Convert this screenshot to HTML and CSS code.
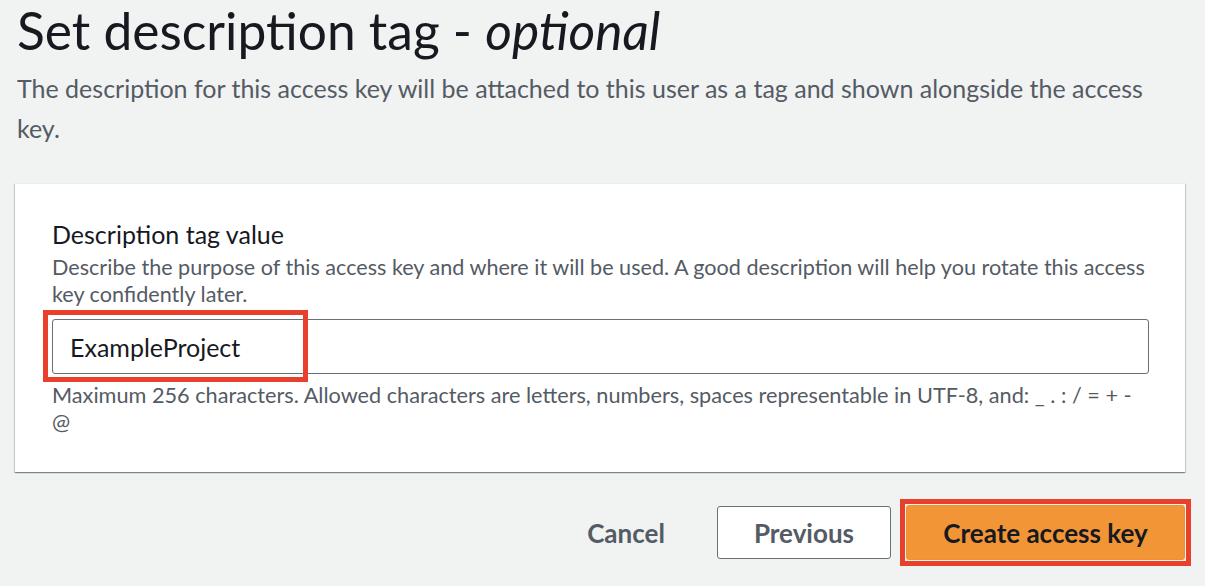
FILE: index.html
```html
<!DOCTYPE html>
<html lang="en">
<head>
<meta charset="utf-8">
<title>Set description tag</title>
<link rel="stylesheet" href="styles.css">
</head>
<body>
<main class="page">
  <h1 class="title">Set description tag - <em>optional</em></h1>
  <p class="intro">The description for this access key will be attached to this user as a tag and shown alongside the access key.</p>

  <section class="card">
    <label class="field-label" for="desc">Description tag value</label>
    <p class="field-desc">Describe the purpose of this access key and where it will be used. A good description will help you rotate this access key confidently later.</p>
    <div class="input-wrap">
      <input id="desc" class="text-input" type="text" value="ExampleProject">
      <span class="annot annot-input"></span>
    </div>
    <p class="field-constraint">Maximum 256 characters. Allowed characters are letters, numbers, spaces representable in UTF-8, and: _ . : / = + - @</p>
  </section>

  <div class="actions">
    <button class="btn btn-link" type="button">Cancel</button>
    <button class="btn btn-normal" type="button">Previous</button>
    <span class="annot-frame">
      <button class="btn btn-primary" type="button">Create access key</button>
    </span>
  </div>
</main>
</body>
</html>
```

FILE: styles.css
```css
* { box-sizing: border-box; }

html, body {
  margin: 0;
  padding: 0;
  background: #f1f2f2;
}

body {
  font-family: Lato, "Open Sans", "Noto Sans", sans-serif;
  color: #16191f;
}

.page {
  padding: 2px 20px 0 15px;
}

.title {
  margin: 0;
  padding-left: 2px;
  font-size: 51.5px;
  line-height: 56px;
  font-weight: 400;
  color: #16191f;
}

.title em {
  font-style: italic;
}

.intro {
  margin: 10px 0 0 0;
  padding-left: 2px;
  font-size: 25px;
  line-height: 40px;
  color: #545b64;
}

.card {
  margin-top: 35px;
  background: #ffffff;
  border-top: 1px solid #eaeded;
  box-shadow: 0 1px 1px 0 rgba(0, 28, 36, 0.3), 1px 1px 1px 0 rgba(0, 28, 36, 0.15), -1px 1px 1px 0 rgba(0, 28, 36, 0.15);
  padding: 35px 36px 36px 37px;
}

.field-label {
  display: block;
  font-size: 25px;
  line-height: 30px;
  color: #16191f;
}

.field-desc {
  margin: 5px 0 0 0;
  font-size: 21.6px;
  line-height: 27px;
  color: #545b64;
}

.input-wrap {
  position: relative;
  margin-top: 11px;
}

.text-input {
  display: block;
  width: 100%;
  height: 55px;
  border: 1px solid #687078;
  border-radius: 3px;
  padding: 0 17px;
  font-family: inherit;
  font-size: 25px;
  color: #16191f;
  background: #fff;
  outline: none;
}

.annot {
  position: absolute;
  border: 5px solid #e8402a;
  pointer-events: none;
}

.annot-input {
  left: -9px;
  top: -9px;
  width: 265px;
  height: 72px;
}

.field-constraint {
  margin: 8px 0 0 0;
  padding-right: 8px;
  font-size: 21.7px;
  line-height: 27px;
  color: #545b64;
}

.actions {
  display: flex;
  justify-content: flex-end;
  align-items: center;
  gap: 15px;
  margin-top: 27px;
}

.btn {
  font-family: inherit;
  font-size: 26px;
  font-weight: 700;
  padding: 0 36px;
  border-radius: 3px;
  cursor: pointer;
}

.btn-link {
  height: 53px;
  border: 1px solid transparent;
  background: transparent;
  color: #545b64;
}

.btn-normal {
  height: 53px;
  border: 1px solid #687078;
  background: #ffffff;
  color: #545b64;
}

.annot-frame {
  display: inline-flex;
  border: 5px solid #e8402a;
  padding: 1px;
  margin: 0 -6px 0 -6px;
  background: #f1f2f2;
}

.btn-primary {
  height: 55px;
  width: 279px;
  padding: 0;
  border: 1px solid #f0912c;
  background: #f19536;
  color: #16191f;
}
```
